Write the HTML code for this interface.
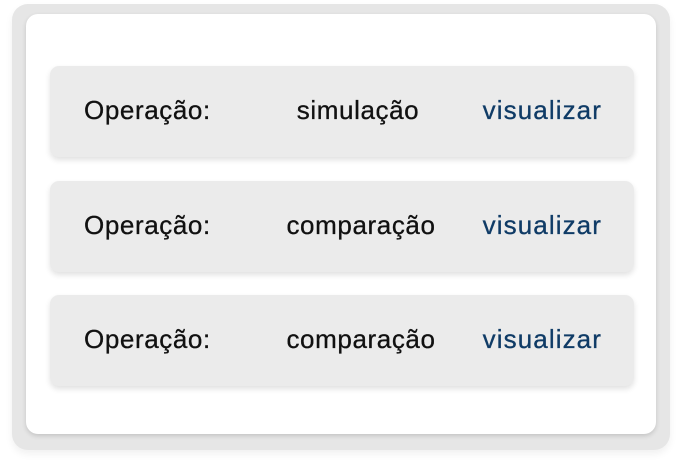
<!DOCTYPE html>
<html><head><style>
body{margin:0;width:682px;height:466px;background:#fff;font-family:"Liberation Sans",sans-serif;position:relative;overflow:hidden}
.outer{position:absolute;left:12px;top:4px;width:658px;height:446px;background:#e6e6e6;border-radius:16px;box-shadow:0 4px 8px rgba(0,0,0,0.06)}
.card{position:absolute;left:26px;top:14px;width:630px;height:420px;background:#fff;border-radius:12px;box-shadow:0 2px 5px rgba(0,0,0,0.15)}
.row{position:absolute;left:50px;width:584px;height:91px;background:#ebebeb;border-radius:9px;box-shadow:0 3px 6px rgba(0,0,0,0.12);font-size:26px;letter-spacing:0.6px;color:#111;-webkit-text-stroke:0.3px currentColor}
.row span{position:absolute;top:29px;line-height:30px;white-space:nowrap}
.a{left:34px}
.b{left:311px;transform:translateX(-50%)}
.c{right:32px;color:#0f3b66;letter-spacing:1.1px}
</style></head><body>
<div class="outer"></div>
<div class="card"></div>
<div class="row" style="top:66px"><span class="a">Operação:</span><span class="b" style="left:308px">simulação</span><span class="c">visualizar</span></div>
<div class="row" style="top:181px"><span class="a">Operação:</span><span class="b">comparação</span><span class="c">visualizar</span></div>
<div class="row" style="top:295px"><span class="a">Operação:</span><span class="b">comparação</span><span class="c">visualizar</span></div>
</body></html>
